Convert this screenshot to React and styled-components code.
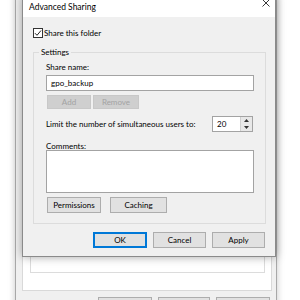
import React from 'react';
import styled, { createGlobalStyle } from 'styled-components';

const GlobalStyle = createGlobalStyle`
  html, body {
    margin: 0;
    padding: 0;
    background: #ffffff;
  }
  body {
    font-family: Lato, "Noto Sans", "Liberation Sans", sans-serif;
    font-size: 8px;
    color: #000;
  }
`;

const Desktop = styled.div`
  position: relative;
  width: 300px;
  height: 300px;
  overflow: hidden;
  background: #ffffff;
`;

// the folder Properties window that sits behind the dialog
const PropertiesWindow = styled.div`
  position: absolute;
  left: 15px;
  top: -20px;
  width: 262px;
  height: 350px;
  box-sizing: border-box;
  background: #f0f0f0;
  border: 1px solid #a8a8a8;
  box-shadow: 0 0 7px rgba(0, 0, 0, 0.22);
  display: flex;
  flex-direction: column;
  padding: 0 4px 16px 6px;
`;

const TabPage = styled.div`
  flex: 1;
  background: #ffffff;
  border: 1px solid #d9d9d9;
  border-top: none;
  display: flex;
  flex-direction: column;
  padding: 0 6px 17px 7px;
`;

const TabGroup = styled.div`
  flex: 1;
  border: 1px solid #dcdcdc;
  border-top: none;
`;

const WindowButtons = styled.div`
  display: flex;
  justify-content: flex-end;
  gap: 6px;
  margin-top: 6px;
  padding-right: 2px;
`;

const Dialog = styled.div`
  position: absolute;
  left: 22px;
  top: -5px;
  width: 254px;
  height: 262px;
  box-sizing: border-box;
  border: 1px solid #8a8a8a;
  background: #f0f0f0;
  box-shadow: 0 0 9px rgba(0, 0, 0, 0.35);
  display: flex;
  flex-direction: column;
`;

const TitleBar = styled.div`
  height: 21px;
  background: #ffffff;
  display: flex;
  align-items: center;
  justify-content: space-between;
  padding: 0 0 0 6px;
  font-size: 8.5px;
`;

const CloseButton = styled.div`
  width: 8px;
  height: 8px;
  margin-right: 5px;
  display: flex;
  align-items: center;
  justify-content: center;
  transform: translateY(-4px);
`;

const Body = styled.div`
  padding: 10px 9px 0 10px;
  display: flex;
  flex-direction: column;
`;

const CheckRow = styled.label`
  height: 12px;
  display: flex;
  align-items: center;
  gap: 1px;
`;

const CheckBox = styled.span`
  width: 10px;
  height: 10px;
  box-sizing: border-box;
  border: 1px solid #333;
  background: #fff;
  display: flex;
  align-items: center;
  justify-content: center;
`;

const GroupBox = styled.div`
  position: relative;
  margin-top: 13px;
  border: 1px solid #dcdcdc;
  padding: 8px 11px 10px 12px;
  display: flex;
  flex-direction: column;
`;

const Legend = styled.span`
  position: absolute;
  left: 5px;
  top: -7px;
  padding: 0 2px;
  line-height: 12px;
  background: #f0f0f0;
`;

const Label = styled.div`
  line-height: ${(p) => p.$lh || 12}px;
  margin-top: ${(p) => p.$mt || 0}px;
  white-space: nowrap;
`;

const TextBox = styled.div`
  margin-top: ${(p) => p.$mt || 0}px;
  height: ${(p) => p.$h || 16}px;
  box-sizing: border-box;
  border: 1px solid #a3a3a3;
  background: #fff;
  padding: 0 4px;
  line-height: 14px;
`;

const ButtonRow = styled.div`
  display: flex;
  gap: ${(p) => p.$gap}px;
  margin-top: ${(p) => p.$mt}px;
  padding-left: 1px;
`;

const Button = styled.div`
  width: ${(p) => p.$w}px;
  height: ${(p) => p.$h || 16}px;
  flex-shrink: 0;
  box-sizing: border-box;
  display: flex;
  align-items: center;
  justify-content: center;
  background: ${(p) => (p.$disabled ? '#cfcfcf' : '#e1e1e1')};
  border: 1px solid ${(p) => (p.$disabled ? '#c8c8c8' : p.$default ? '#0078d7' : '#adadad')};
  box-shadow: ${(p) => (p.$default ? 'inset 0 0 0 1px #0078d7' : 'none')};
  color: ${(p) => (p.$disabled ? '#a3a3a3' : '#000')};
  white-space: nowrap;
`;

const LimitRow = styled.div`
  margin-top: 7px;
  height: 16px;
  display: flex;
  align-items: center;
  justify-content: space-between;
  white-space: nowrap;
`;

const Spinner = styled.div`
  width: 41px;
  height: 16px;
  flex-shrink: 0;
  box-sizing: border-box;
  border: 1px solid #a3a3a3;
  background: #fff;
  display: flex;
  margin-right: 1px;
`;

const SpinValue = styled.div`
  flex: 1;
  padding-left: 4px;
  line-height: 14px;
`;

const SpinArrows = styled.div`
  width: 11px;
  display: flex;
  flex-direction: column;
  background: #e8e8e8;
  border-left: 1px solid #d0d0d0;
`;

const SpinHalf = styled.div`
  flex: 1;
  display: flex;
  align-items: center;
  justify-content: center;
`;

const Footer = styled.div`
  display: flex;
  justify-content: flex-end;
  gap: 6px;
  margin-top: 8px;
  padding-right: 1px;
`;

const App = () => {
  return (
    <>
      <GlobalStyle />
      <Desktop>
        <PropertiesWindow>
          <TabPage>
            <TabGroup />
          </TabPage>
          <WindowButtons>
            <Button $w={54} />
            <Button $w={52} />
            <Button $w={54} />
          </WindowButtons>
        </PropertiesWindow>

        <Dialog>
          <TitleBar>
            <span>Advanced Sharing</span>
            <CloseButton>
              <svg width="8" height="8" viewBox="0 0 8 8">
                <path d="M0.5 0.5 L7.5 7.5 M7.5 0.5 L0.5 7.5" stroke="#222" strokeWidth="0.9" />
              </svg>
            </CloseButton>
          </TitleBar>

          <Body>
            <CheckRow>
              <CheckBox>
                <svg width="8" height="8" viewBox="0 0 8 8">
                  <path d="M1 4.2 L3 6.3 L7 1.5" stroke="#222" strokeWidth="1" fill="none" />
                </svg>
              </CheckBox>
              Share this folder
            </CheckRow>

            <GroupBox>
              <Legend>Settings</Legend>
              <Label>Share name:</Label>
              <TextBox $mt={2}>gpo_backup</TextBox>
              <ButtonRow $gap={2} $mt={4}>
                <Button $w={44} $h={14} $disabled>Add</Button>
                <Button $w={46} $h={14} $disabled>Remove</Button>
              </ButtonRow>
              <LimitRow>
                <span>Limit the number of simultaneous users to:</span>
                <Spinner>
                  <SpinValue>20</SpinValue>
                  <SpinArrows>
                    <SpinHalf>
                      <svg width="5" height="3" viewBox="0 0 5 3">
                        <path d="M0 3 L2.5 0 L5 3 Z" fill="#333" />
                      </svg>
                    </SpinHalf>
                    <SpinHalf>
                      <svg width="5" height="3" viewBox="0 0 5 3">
                        <path d="M0 0 L2.5 3 L5 0 Z" fill="#333" />
                      </svg>
                    </SpinHalf>
                  </SpinArrows>
                </Spinner>
              </LimitRow>
              <Label $lh={8} $mt={10}>Comments:</Label>
              <TextBox $h={43} />
              <ButtonRow $gap={9} $mt={4}>
                <Button $w={54}>Permissions</Button>
                <Button $w={57}>Caching</Button>
              </ButtonRow>
            </GroupBox>

            <Footer>
              <Button $w={54} $default>OK</Button>
              <Button $w={53}>Cancel</Button>
              <Button $w={53}>Apply</Button>
            </Footer>
          </Body>
        </Dialog>
      </Desktop>
    </>
  );
};

export default App;
